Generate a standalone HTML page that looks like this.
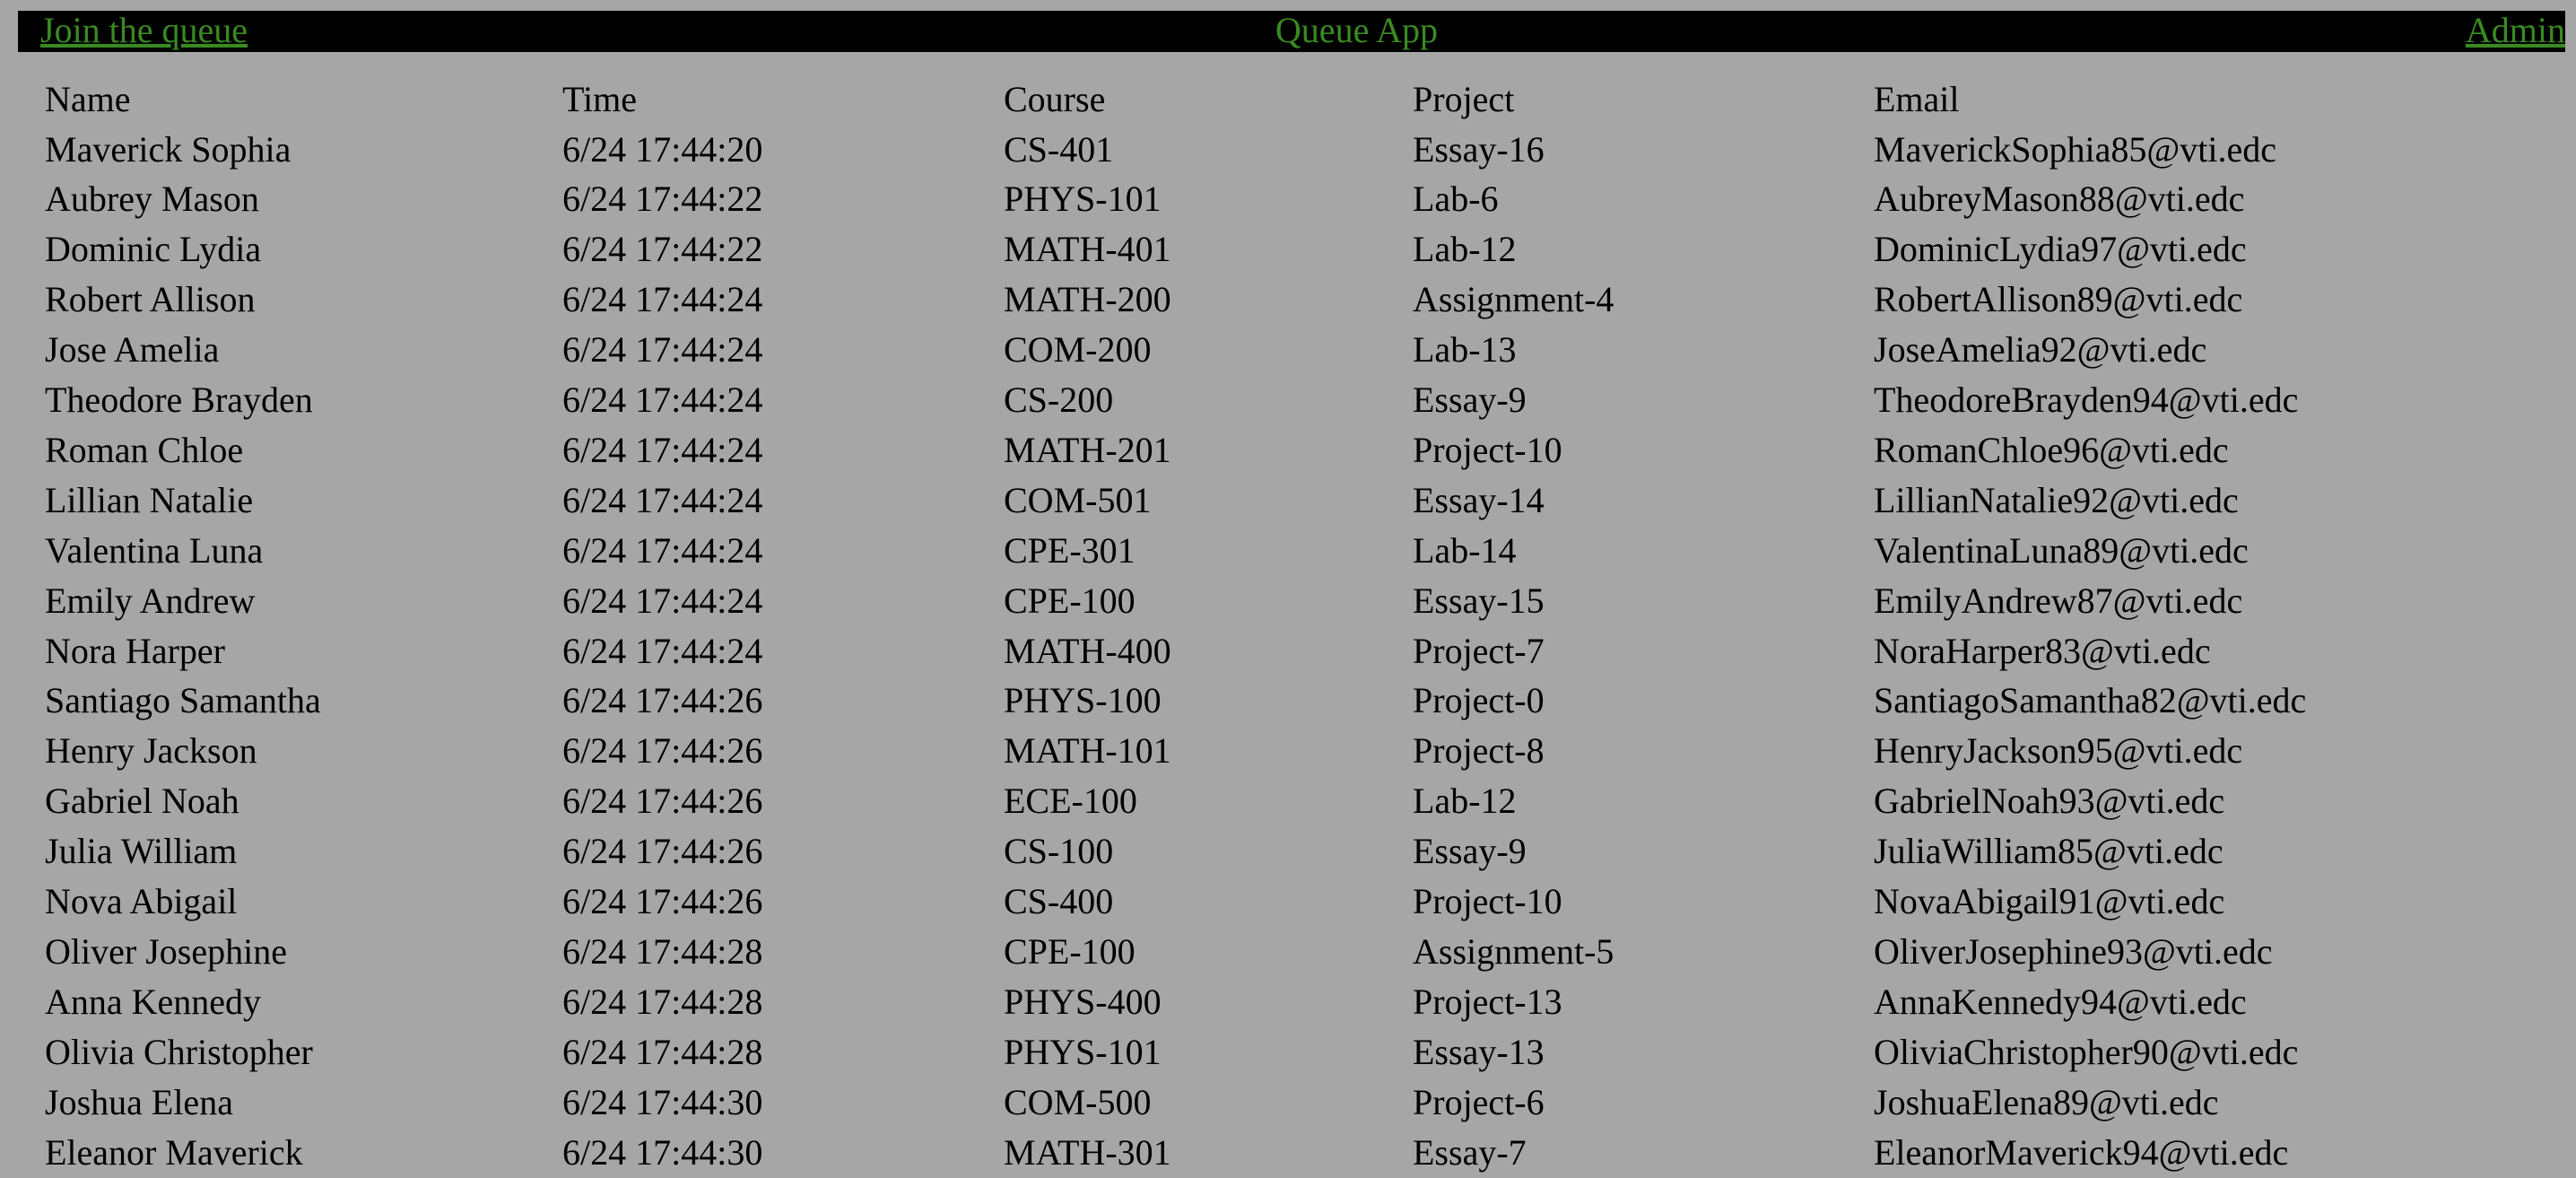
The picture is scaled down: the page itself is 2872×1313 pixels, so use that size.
<!DOCTYPE html>
<html><head><meta charset="utf-8"><style>
html,body{margin:0;padding:0;background:#a6a6a6;width:2872px;height:1294px;overflow:hidden;font-family:"Liberation Serif",serif;font-size:40px;}
.bar{position:absolute;left:20px;top:12px;width:2840px;height:46px;background:#000;display:flex;justify-content:space-between;box-sizing:border-box;padding-left:25px;line-height:44px;color:#3a8a22;}
.bar a{color:#3a8a22;text-decoration:underline;}
.r{position:absolute;left:0;height:56px;line-height:56px;white-space:nowrap;color:#000;}
.r span{position:absolute;top:0;}
.c1{left:50px}.c2{left:627px}.c3{left:1119px}.c4{left:1575px}.c5{left:2089px}
</style></head><body>
<div class="bar"><a>Join the queue</a><span>Queue App</span><a>Admin</a></div>
<div class="r" style="top:82.5px"><span class="c1">Name</span><span class="c2">Time</span><span class="c3">Course</span><span class="c4">Project</span><span class="c5">Email</span></div>
<div class="r" style="top:138.5px"><span class="c1">Maverick Sophia</span><span class="c2">6/24 17:44:20</span><span class="c3">CS-401</span><span class="c4">Essay-16</span><span class="c5">MaverickSophia85@vti.edc</span></div>
<div class="r" style="top:194.4px"><span class="c1">Aubrey Mason</span><span class="c2">6/24 17:44:22</span><span class="c3">PHYS-101</span><span class="c4">Lab-6</span><span class="c5">AubreyMason88@vti.edc</span></div>
<div class="r" style="top:250.3px"><span class="c1">Dominic Lydia</span><span class="c2">6/24 17:44:22</span><span class="c3">MATH-401</span><span class="c4">Lab-12</span><span class="c5">DominicLydia97@vti.edc</span></div>
<div class="r" style="top:306.2px"><span class="c1">Robert Allison</span><span class="c2">6/24 17:44:24</span><span class="c3">MATH-200</span><span class="c4">Assignment-4</span><span class="c5">RobertAllison89@vti.edc</span></div>
<div class="r" style="top:362.1px"><span class="c1">Jose Amelia</span><span class="c2">6/24 17:44:24</span><span class="c3">COM-200</span><span class="c4">Lab-13</span><span class="c5">JoseAmelia92@vti.edc</span></div>
<div class="r" style="top:418px"><span class="c1">Theodore Brayden</span><span class="c2">6/24 17:44:24</span><span class="c3">CS-200</span><span class="c4">Essay-9</span><span class="c5">TheodoreBrayden94@vti.edc</span></div>
<div class="r" style="top:473.9px"><span class="c1">Roman Chloe</span><span class="c2">6/24 17:44:24</span><span class="c3">MATH-201</span><span class="c4">Project-10</span><span class="c5">RomanChloe96@vti.edc</span></div>
<div class="r" style="top:529.8px"><span class="c1">Lillian Natalie</span><span class="c2">6/24 17:44:24</span><span class="c3">COM-501</span><span class="c4">Essay-14</span><span class="c5">LillianNatalie92@vti.edc</span></div>
<div class="r" style="top:585.7px"><span class="c1">Valentina Luna</span><span class="c2">6/24 17:44:24</span><span class="c3">CPE-301</span><span class="c4">Lab-14</span><span class="c5">ValentinaLuna89@vti.edc</span></div>
<div class="r" style="top:641.6px"><span class="c1">Emily Andrew</span><span class="c2">6/24 17:44:24</span><span class="c3">CPE-100</span><span class="c4">Essay-15</span><span class="c5">EmilyAndrew87@vti.edc</span></div>
<div class="r" style="top:697.5px"><span class="c1">Nora Harper</span><span class="c2">6/24 17:44:24</span><span class="c3">MATH-400</span><span class="c4">Project-7</span><span class="c5">NoraHarper83@vti.edc</span></div>
<div class="r" style="top:753.4px"><span class="c1">Santiago Samantha</span><span class="c2">6/24 17:44:26</span><span class="c3">PHYS-100</span><span class="c4">Project-0</span><span class="c5">SantiagoSamantha82@vti.edc</span></div>
<div class="r" style="top:809.3px"><span class="c1">Henry Jackson</span><span class="c2">6/24 17:44:26</span><span class="c3">MATH-101</span><span class="c4">Project-8</span><span class="c5">HenryJackson95@vti.edc</span></div>
<div class="r" style="top:865.2px"><span class="c1">Gabriel Noah</span><span class="c2">6/24 17:44:26</span><span class="c3">ECE-100</span><span class="c4">Lab-12</span><span class="c5">GabrielNoah93@vti.edc</span></div>
<div class="r" style="top:921.1px"><span class="c1">Julia William</span><span class="c2">6/24 17:44:26</span><span class="c3">CS-100</span><span class="c4">Essay-9</span><span class="c5">JuliaWilliam85@vti.edc</span></div>
<div class="r" style="top:977px"><span class="c1">Nova Abigail</span><span class="c2">6/24 17:44:26</span><span class="c3">CS-400</span><span class="c4">Project-10</span><span class="c5">NovaAbigail91@vti.edc</span></div>
<div class="r" style="top:1032.9px"><span class="c1">Oliver Josephine</span><span class="c2">6/24 17:44:28</span><span class="c3">CPE-100</span><span class="c4">Assignment-5</span><span class="c5">OliverJosephine93@vti.edc</span></div>
<div class="r" style="top:1088.8px"><span class="c1">Anna Kennedy</span><span class="c2">6/24 17:44:28</span><span class="c3">PHYS-400</span><span class="c4">Project-13</span><span class="c5">AnnaKennedy94@vti.edc</span></div>
<div class="r" style="top:1144.7px"><span class="c1">Olivia Christopher</span><span class="c2">6/24 17:44:28</span><span class="c3">PHYS-101</span><span class="c4">Essay-13</span><span class="c5">OliviaChristopher90@vti.edc</span></div>
<div class="r" style="top:1200.6px"><span class="c1">Joshua Elena</span><span class="c2">6/24 17:44:30</span><span class="c3">COM-500</span><span class="c4">Project-6</span><span class="c5">JoshuaElena89@vti.edc</span></div>
<div class="r" style="top:1256.5px"><span class="c1">Eleanor Maverick</span><span class="c2">6/24 17:44:30</span><span class="c3">MATH-301</span><span class="c4">Essay-7</span><span class="c5">EleanorMaverick94@vti.edc</span></div>
</body></html>
